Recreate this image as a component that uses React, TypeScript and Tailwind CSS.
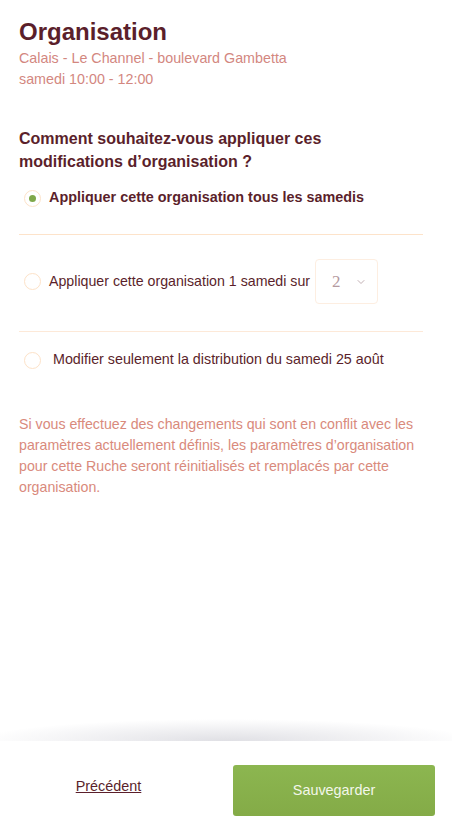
import { ChevronDown } from 'lucide-react';

const maroon = 'text-[#5b1f2b]';

function Radio({ checked }: { checked?: boolean }) {
  return (
    <span className="flex size-[17px] shrink-0 items-center justify-center rounded-full border border-[#fde2c8] bg-white">
      {checked && <span className="size-[7px] rounded-full bg-[#7fa84a]" />}
    </span>
  );
}

export default function App() {
  return (
    <div className="flex min-h-[825px] flex-col bg-white font-['Liberation_Sans',Arial,sans-serif]">
      <div className="flex-1 px-[19px] pt-[18px]">
        <h1 className={`text-[24px] font-bold leading-[28px] ${maroon}`}>Organisation</h1>
        <div className="mt-[2px] text-[14.3px] leading-[21px] text-[#d3877f]">
          <p>Calais - Le Channel - boulevard Gambetta</p>
          <p>samedi 10:00 - 12:00</p>
        </div>

        <h2 className={`mt-[37px] text-[16px] font-bold leading-[23px] ${maroon}`}>
          Comment souhaitez-vous appliquer ces
          <br />
          modifications d’organisation ?
        </h2>

        <div className="mt-[15px] mr-[10px]">
          <label className="flex h-[20px] items-center gap-[8px] pl-[5px]">
            <Radio checked />
            <span className={`text-[14.4px] font-bold ${maroon}`}>
              Appliquer cette organisation tous les samedis
            </span>
          </label>
          <div className="mt-[26px] border-t border-[#fde3ca]" />

          <div className="flex items-center pt-[24px] pb-[27px] pl-[5px]">
            <Radio />
            <span className={`ml-[8px] text-[14.2px] ${maroon}`}>
              Appliquer cette organisation 1 samedi sur
            </span>
            <div className="ml-[5px] flex h-[45px] w-[63px] items-center rounded-[4px] border border-[#fdeee1] pl-[16px]">
              <span className="font-['Liberation_Serif',serif] text-[17px] text-[#b49aa0]">2</span>
              <ChevronDown className="ml-[14px] size-[12px] text-[#ad959b]" strokeWidth={1.5} />
            </div>
          </div>
          <div className="border-t border-[#fde9d8]" />

          <label className="mt-[18px] flex h-[20px] items-center pl-[5px]">
            <Radio />
            <span className={`ml-[12px] text-[14.3px] ${maroon}`}>
              Modifier seulement la distribution du samedi 25 août
            </span>
          </label>
        </div>

        <p className="mt-[44px] text-[14.2px] leading-[21px] text-[#d98a7c]">
          Si vous effectuez des changements qui sont en conflit avec les paramètres actuellement
          définis, les paramètres d’organisation pour cette Ruche seront réinitialisés et remplacés
          par cette organisation.
        </p>
      </div>

      <div className="h-[22px] bg-[radial-gradient(ellipse_55%_100%_at_50%_100%,rgba(60,60,90,0.16),rgba(60,60,90,0)_100%)]" />
      <div className="flex h-[84px] items-start bg-white pt-[24px]">
        <div className="flex h-[51px] w-[217px] items-center justify-center">
          <a href="#" className={`-mt-[8px] text-[14.4px] underline ${maroon}`}>
            Précédent
          </a>
        </div>
        <button className="ml-[16px] h-[51px] w-[202px] rounded-[3px] bg-gradient-to-b from-[#8cb650] to-[#84ab47] text-[14.4px] text-[#f3f7ea]">
          Sauvegarder
        </button>
      </div>
    </div>
  );
}
